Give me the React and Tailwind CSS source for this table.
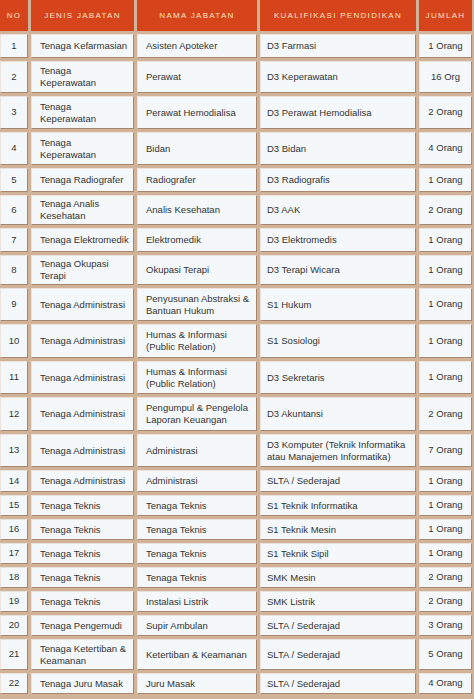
const rows = [
  ["1", ["Tenaga Kefarmasian"], ["Asisten Apoteker"], ["D3 Farmasi"], "1 Orang", "h-[24px]"],
  ["2", ["Tenaga", "Keperawatan"], ["Perawat"], ["D3 Keperawatan"], "16 Org", "h-[32px]"],
  ["3", ["Tenaga", "Keperawatan"], ["Perawat Hemodialisa"], ["D3 Perawat Hemodialisa"], "2 Orang", "h-[33px]"],
  ["4", ["Tenaga", "Keperawatan"], ["Bidan"], ["D3 Bidan"], "4 Orang", "h-[33px]"],
  ["5", ["Tenaga Radiografer"], ["Radiografer"], ["D3 Radiografis"], "1 Orang", "h-[24px]"],
  ["6", ["Tenaga Analis", "Kesehatan"], ["Analis Kesehatan"], ["D3 AAK"], "2 Orang", "h-[30px]"],
  ["7", ["Tenaga Elektromedik"], ["Elektromedik"], ["D3 Elektromedis"], "1 Orang", "h-[24px]"],
  ["8", ["Tenaga Okupasi", "Terapi"], ["Okupasi Terapi"], ["D3 Terapi Wicara"], "1 Orang", "h-[30px]"],
  ["9", ["Tenaga Administrasi"], ["Penyusunan Abstraksi &", "Bantuan Hukum"], ["S1 Hukum"], "1 Orang", "h-[33px]"],
  ["10", ["Tenaga Administrasi"], ["Humas & Informasi", "(Public Relation)"], ["S1 Sosiologi"], "1 Orang", "h-[34px]"],
  ["11", ["Tenaga Administrasi"], ["Humas & Informasi", "(Public Relation)"], ["D3 Sekretaris"], "1 Orang", "h-[33px]"],
  ["12", ["Tenaga Administrasi"], ["Pengumpul & Pengelola", "Laporan Keuangan"], ["D3 Akuntansi"], "2 Orang", "h-[34px]"],
  ["13", ["Tenaga Administrasi"], ["Administrasi"], ["D3 Komputer (Teknik Informatika", "atau Manajemen Informatika)"], "7 Orang", "h-[33px]"],
  ["14", ["Tenaga Administrasi"], ["Administrasi"], ["SLTA / Sederajad"], "1 Orang", "h-[22px]"],
  ["15", ["Tenaga Teknis"], ["Tenaga Teknis"], ["S1 Teknik Informatika"], "1 Orang", "h-[21px]"],
  ["16", ["Tenaga Teknis"], ["Tenaga Teknis"], ["S1 Teknik Mesin"], "1 Orang", "h-[21px]"],
  ["17", ["Tenaga Teknis"], ["Tenaga Teknis"], ["S1 Teknik Sipil"], "1 Orang", "h-[21px]"],
  ["18", ["Tenaga Teknis"], ["Tenaga Teknis"], ["SMK Mesin"], "2 Orang", "h-[21px]"],
  ["19", ["Tenaga Teknis"], ["Instalasi Listrik"], ["SMK Listrik"], "2 Orang", "h-[21px]"],
  ["20", ["Tenaga Pengemudi"], ["Supir Ambulan"], ["SLTA / Sederajad"], "3 Orang", "h-[21px]"],
  ["21", ["Tenaga Ketertiban &", "Keamanan"], ["Ketertiban & Keamanan"], ["SLTA / Sederajad"], "5 Orang", "h-[31px]"],
  ["22", ["Tenaga Juru Masak"], ["Juru Masak"], ["SLTA / Sederajad"], "4 Orang", "h-[21px]"],
];

const cols = "grid grid-cols-[28px_103px_120px_156px_53px] gap-x-[3px]";
const cell =
  "flex items-center bg-[#f4f8fa] border-t border-l border-t-[#ece4dc] border-l-[#ece4dc] border-b border-r border-b-[#a8876d] border-r-[#a8876d]";

function Lines({ lines }) {
  return (
    <div className="leading-[12px] whitespace-nowrap">
      {lines.map((l, i) => (
        <div key={i}>{l}</div>
      ))}
    </div>
  );
}

export default function App() {
  return (
    <div
      className="w-[474px] h-[699px] overflow-hidden bg-[#d0b398] text-[#333] text-[9.5px]"
      style={{ fontFamily: '"Liberation Sans", Arial, sans-serif' }}
    >
      <div className="flex flex-col gap-y-[3px]">
        <div className={cols + " h-[31px] text-[8px] tracking-[1.3px] text-[#fbe2c2] uppercase"}>
          <div className="flex items-center justify-center bg-[#d5441b]">NO</div>
          <div className="flex items-center justify-center bg-[#d5441b]">Jenis Jabatan</div>
          <div className="flex items-center justify-center bg-[#d5441b]">Nama Jabatan</div>
          <div className="flex items-center justify-center bg-[#d5441b]">Kualifikasi Pendidikan</div>
          <div className="flex items-center justify-center bg-[#d5441b]">Jumlah</div>
        </div>
        {rows.map(([no, jenis, nama, kual, jml, h]) => (
          <div key={no} className={cols + " " + h}>
            <div className={cell + " justify-center"}>{no}</div>
            <div className={cell + " pl-[8px]"}>
              <Lines lines={jenis} />
            </div>
            <div className={cell + " pl-[8px]"}>
              <Lines lines={nama} />
            </div>
            <div className={cell + " pl-[6px]"}>
              <Lines lines={kual} />
            </div>
            <div className={cell + " justify-center whitespace-nowrap"}>{jml}</div>
          </div>
        ))}
      </div>
    </div>
  );
}
